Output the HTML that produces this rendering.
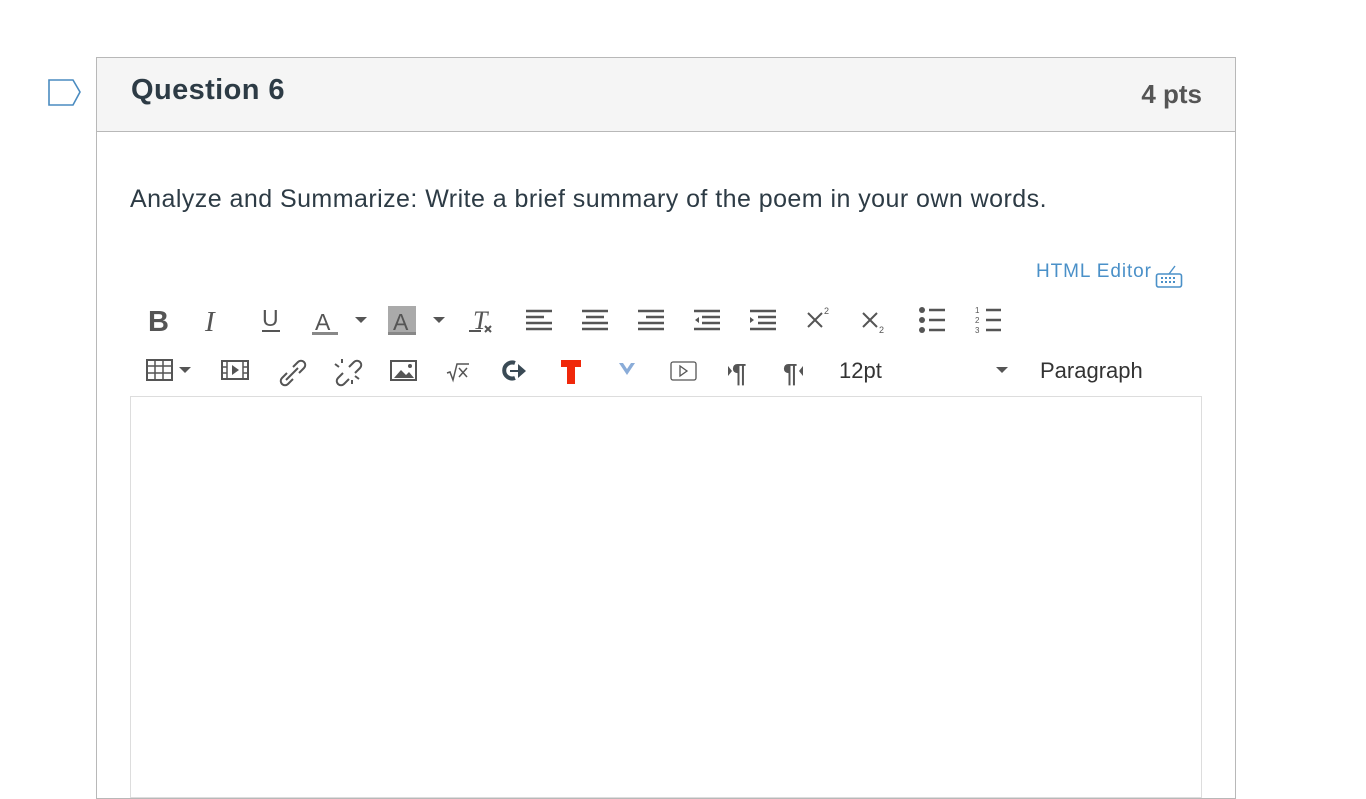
<!DOCTYPE html>
<html><head><meta charset="utf-8"><style>
body{margin:0;width:1366px;height:768px;background:#fff;overflow:hidden;font-family:"Liberation Sans",sans-serif;position:relative}
.box{position:absolute;left:96px;top:57px;width:1138px;height:740px;border:1px solid #b8b8b8}
.hdr{height:73px;background:#f5f5f5;border-bottom:1px solid #b8b8b8;position:relative}
.t{position:absolute;left:34px;top:16px;font-size:29px;font-weight:bold;color:#2d3b45;letter-spacing:0.4px}
.pts{position:absolute;right:33px;top:21px;font-size:26px;font-weight:bold;color:#555}
.q{position:absolute;left:130px;top:185px;font-size:25px;color:#2d3b45;letter-spacing:0.45px}
.he{position:absolute;left:1036px;top:261px;font-size:19px;color:#4a90c8;letter-spacing:0.9px}
.ed{position:absolute;left:130px;top:396px;width:1070px;height:400px;border:1px solid #ddd}
.i{position:absolute}
.txt{position:absolute;font-size:22px;color:#333}
</style></head><body>
<svg class="i" style="left:47px;top:79px" width="36" height="28"><path d="M2 1H26L33 13L26 26H2Z" fill="none" stroke="#4a8bc0" stroke-width="1.6"/></svg>
<div class="box"><div class="hdr"><div class="t">Question 6</div><div class="pts">4 pts</div></div></div>
<div class="q">Analyze and Summarize: Write a brief summary of the poem in your own words.</div>
<div class="he">HTML Editor</div>
<svg class="i" style="left:1155px;top:264px" width="28" height="26"><path d="M14 10L20 2" stroke="#4a90c8" stroke-width="1.4"/><rect x="1.5" y="10" width="25" height="13" rx="2" fill="none" stroke="#4a90c8" stroke-width="1.6"/><path d="M6 14h16M6 18h16" stroke="#4a90c8" stroke-width="2" stroke-dasharray="2 2"/></svg>
<svg class="i" style="left:130px;top:296px" width="900" height="100" fill="#555" stroke="#555">
<text x="18" y="35" font-size="29" font-weight="bold" stroke="none" font-family="Liberation Sans">B</text>
<text x="75" y="35" font-size="29" font-style="italic" stroke="none" font-family="Liberation Serif">I</text>
<text x="132" y="30" font-size="23" stroke="none">U</text><rect x="132" y="34" width="18" height="2" stroke="none"/>
<text x="185" y="34" font-size="23" stroke="none">A</text><rect x="182" y="36" width="26" height="3" fill="#888" stroke="none"/>
<path d="M225 21h12l-6 6z" stroke="none"/>
<rect x="258" y="10" width="28" height="29" fill="#aaa" stroke="none"/><text x="263" y="34" font-size="23" stroke="none">A</text><rect x="258" y="36" width="28" height="3" fill="#888" stroke="none"/>
<path d="M303 21h12l-6 6z" stroke="none"/>
<text x="343" y="33" font-size="26" font-style="italic" stroke="none" font-family="Liberation Serif">T</text><path d="M339 35h12M355 30l6 6M361 30l-6 6" stroke-width="2" fill="none"/>
<g stroke-width="2.5" fill="none">
<path d="M396 15h26M396 21h18M396 27h26M396 33h26"/>
<path d="M452 15h26M456 21h18M452 27h26M452 33h26"/>
<path d="M508 15h26M516 21h18M508 27h26M508 33h26"/>
<path d="M564 15h26M572 21h18M572 27h18M564 33h26"/>
<path d="M620 15h26M628 21h18M628 27h18M620 33h26"/>
</g>
<path d="M569 21v6l-4-3zM620 21v6l4-3z" stroke="none"/>
<path d="M678 17l14 14M692 17l-14 14M733 17l14 14M747 17l-14 14" stroke-width="2"/>
<text x="694" y="18" font-size="9" stroke="none">2</text><text x="749" y="37" font-size="9" stroke="none">2</text>
<circle cx="792" cy="14" r="3" stroke="none"/><circle cx="792" cy="24" r="3" stroke="none"/><circle cx="792" cy="34" r="3" stroke="none"/>
<path d="M799 14h16M799 24h16M799 34h16M856 14h15M856 24h15M856 34h15" stroke-width="2.5"/>
<text x="845" y="17" font-size="8" stroke="none">1</text><text x="845" y="27" font-size="8" stroke="none">2</text><text x="845" y="37" font-size="8" stroke="none">3</text>
</svg>
<svg class="i" style="left:130px;top:350px" width="900" height="45" fill="#555" stroke="#555">
<rect x="17" y="10" width="25" height="20" fill="none" stroke-width="2"/><path d="M17 16h25M17 23h25M25 10v20M33 10v20" stroke-width="1.5"/>
<path d="M49 17h12l-6 6z" stroke="none"/>
<rect x="92" y="11" width="26" height="18" fill="none" stroke-width="2"/><path d="M97 11v18M113 11v18M92 17h5M92 23h5M113 17h5M113 23h5" stroke-width="1.5"/><path d="M102 15v10l7-5z" stroke="none"/>
<path d="M157 23l-5 5a4 4 0 0 0 6 6l5-5M163 17l5-5a4 4 0 0 1 6 6l-5 5M156 30l12-12" fill="none" stroke-width="2"/>
<path d="M213 23l-5 5a4 4 0 0 0 6 6l5-5M219 17l5-5a4 4 0 0 1 6 6l-5 5M205 14l4 3M212 9v4M229 29l-4-3M222 34v-4" fill="none" stroke-width="2"/>
<rect x="261" y="11" width="25" height="19" fill="none" stroke-width="2"/><path d="M264 28l7-8 5 5 3-3 5 6z" stroke="none"/><circle cx="280" cy="16" r="2" stroke="none"/>
<path d="M317 23l3-1 3 8 4-16h12M329 18l8 9M337 18l-8 9" fill="none" stroke-width="1.5"/>
<path d="M385 13a8 8 0 1 0 0 15" fill="none" stroke="#3a4a55" stroke-width="4"/><path d="M380 20h8v-6l8 7-8 7v-6h-8z" fill="#3a4a55" stroke="none"/>
<path d="M431 10h20v7h-6v17h-8v-17h-6z" fill="#f0280a" stroke="none"/>
<path d="M489 13l8 12 8-12-4 0-4 6-4-6z" fill="#8aacd8" stroke="none"/>
<rect x="541" y="12" width="25" height="18" rx="2" fill="none" stroke-width="1.3"/><path d="M550 16v10l7-5z" fill="none" stroke-width="1.3"/>
<text x="602" y="32" font-size="26" font-weight="bold" stroke="none">¶</text><path d="M598 16v10l4-5z" stroke="none"/>
<text x="653" y="32" font-size="26" font-weight="bold" stroke="none">¶</text><path d="M673 16v10l-4-5z" stroke="none"/>
<path d="M866 17h12l-6 6z" stroke="none"/>
</svg>
<div class="txt" style="left:839px;top:358px">12pt</div>
<div class="txt" style="left:1040px;top:358px">Paragraph</div>
<div class="ed"></div>
</body></html>
